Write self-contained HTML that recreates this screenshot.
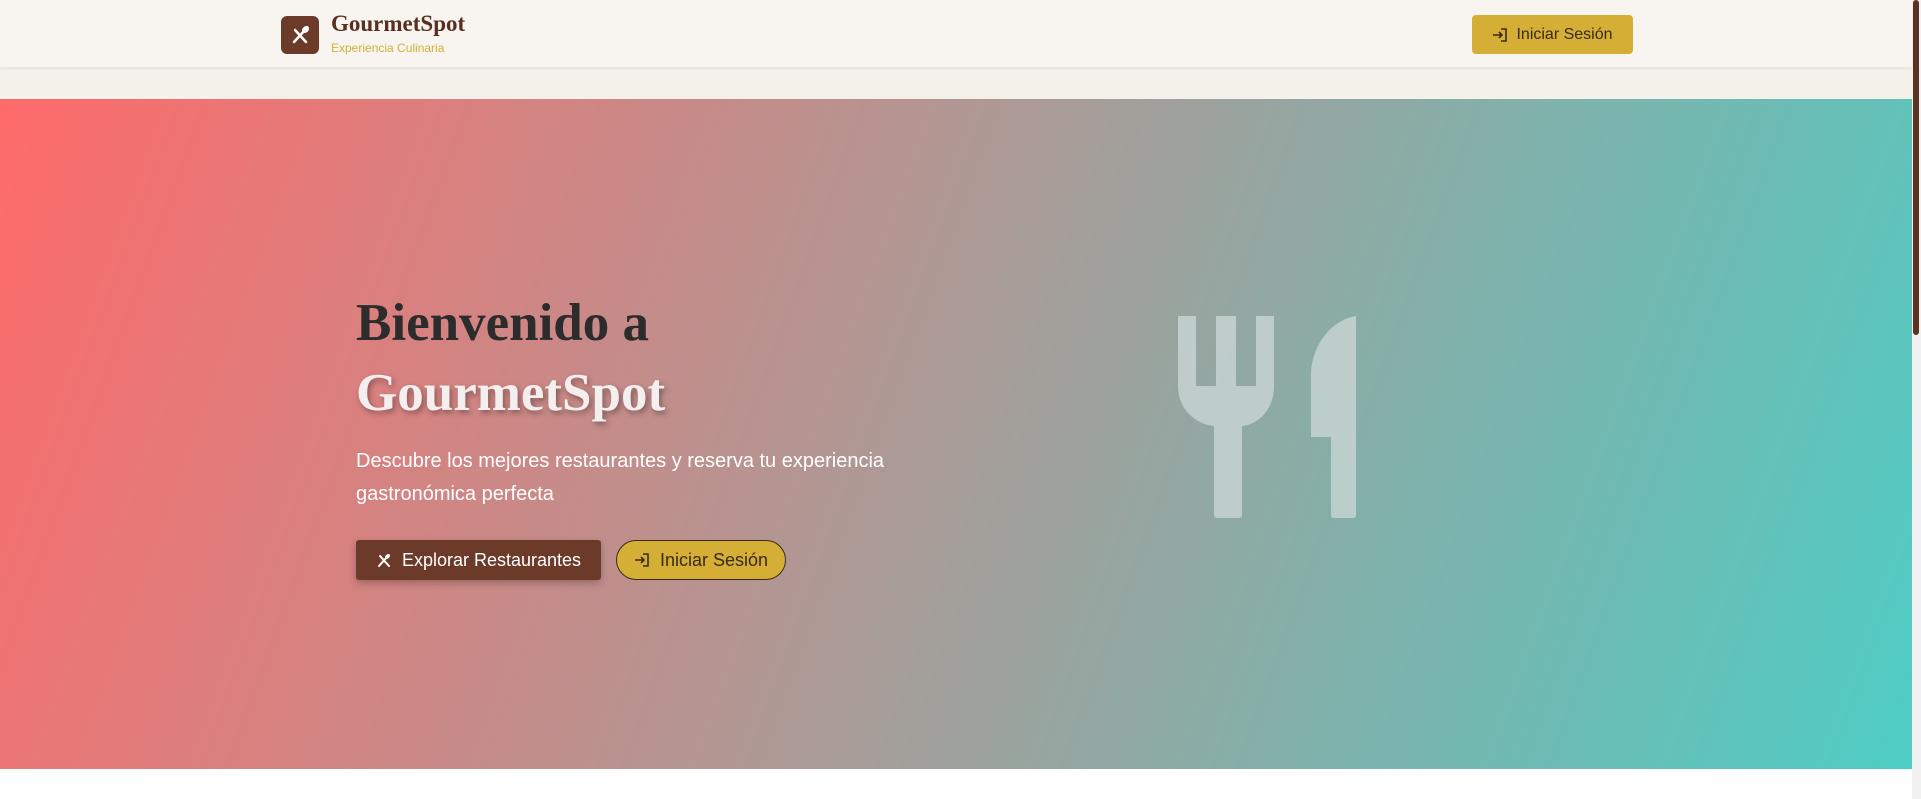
<!DOCTYPE html>
<html><head><meta charset="utf-8"><style>
*{margin:0;padding:0;box-sizing:border-box}
body{width:1921px;height:799px;overflow:hidden;background:#fff;font-family:"Liberation Sans",sans-serif;position:relative}
.hdr{position:absolute;left:0;top:0;width:1912px;height:68px;background:#f8f5f0;border-bottom:1px solid #ebe6df;box-shadow:0 1px 3px rgba(0,0,0,.06);z-index:2}
.gap{position:absolute;left:0;top:68px;width:1912px;height:31px;background:#f4f0ea}
.logo{position:absolute;left:281px;top:16px;width:38px;height:38px;background:#6b3a28;border-radius:6px;z-index:3}
.t1{position:absolute;left:331px;top:11px;font-family:"Liberation Serif",serif;font-weight:bold;font-size:23px;color:#5a2f20;z-index:3}
.t2{position:absolute;left:331px;top:41px;font-size:12px;color:#d4ae35;z-index:3}
.hb{position:absolute;left:1472px;top:15px;width:161px;height:39px;background:#d4ae35;border-radius:4px;color:#3a2a1a;font-size:16px;display:flex;align-items:center;justify-content:center;gap:8px;z-index:3}
.hero{position:absolute;left:0;top:99px;width:1912px;height:670px;background:linear-gradient(110deg,#ff6b6b 0%,#a89c98 50%,#4ecdc4 100%)}
h1{position:absolute;left:356px;top:288px;font-family:"Liberation Serif",serif;font-weight:bold;font-size:53px;line-height:70px;color:#2c2c2c}
h1 span{color:#f5eeee;text-shadow:2px 3px 6px rgba(0,0,0,.35)}
p{position:absolute;left:356px;top:445px;font-size:20px;line-height:33px;color:#fff}
.b1{position:absolute;left:356px;top:540px;width:245px;height:40px;background:#6b3a28;border-radius:3px;color:#fff;font-size:18px;display:flex;align-items:center;justify-content:center;gap:10px;box-shadow:0 3px 8px rgba(0,0,0,.25)}
.b2{position:absolute;left:616px;top:540px;width:170px;height:40px;background:#d4ae35;border:1px solid #3a2a1a;border-radius:20px;color:#3a2a1a;font-size:18px;display:flex;align-items:center;justify-content:center;gap:10px}
.sb{position:absolute;left:1912px;top:0;width:9px;height:799px;background:#f1f1f1}
.sb div{position:absolute;left:1px;top:0;width:6px;height:335px;background:#5a3322;border-radius:3px}
</style></head><body>
<div class="hdr"></div><div class="gap"></div>
<div class="logo"><svg width="38" height="38" viewBox="0 0 38 38"><g stroke="#fff" stroke-width="2.5" stroke-linecap="round" fill="none"><path d="M13 26L24 14"/><path d="M25 26L14 14"/></g><ellipse cx="24.5" cy="13.5" rx="3" ry="4" transform="rotate(45 24.5 13.5)" fill="#fff"/></svg></div>
<div class="t1">GourmetSpot</div><div class="t2">Experiencia Culinaria</div>
<div class="hb"><svg width="16" height="16" viewBox="0 0 16 16" fill="none" stroke="#3a2a1a" stroke-width="1.6"><path d="M1 8h9M7 5l3 3-3 3M9 2h5v12H9"/></svg>Iniciar Sesión</div>
<div class="hero"></div>
<h1>Bienvenido a<br><span>GourmetSpot</span></h1>
<p>Descubre los mejores restaurantes y reserva tu experiencia<br>gastronómica perfecta</p>
<div class="b1"><svg width="16" height="16" viewBox="0 0 16 16"><g stroke="#fff" stroke-width="2" stroke-linecap="round"><path d="M3 14L11 5M13 14L4 4"/></g><ellipse cx="11.5" cy="4.5" rx="2" ry="3" transform="rotate(45 11.5 4.5)" fill="#fff"/></svg>Explorar Restaurantes</div>
<div class="b2"><svg width="16" height="16" viewBox="0 0 16 16" fill="none" stroke="#3a2a1a" stroke-width="1.6"><path d="M1 8h9M7 5l3 3-3 3M9 2h5v12H9"/></svg>Iniciar Sesión</div>
<svg style="position:absolute;left:1176px;top:316px" width="182" height="202" viewBox="0 0 182 202"><g fill="#c9d6d3" opacity=".8"><path d="M2 0h18v70h20V0h20v70h20V0h18v70c0 22-14 38-32 40v89q0 3-3 3H41q-3 0-3-3v-89C18 108 2 92 2 70z"/><path d="M180 0v199q0 3-3 3h-19q-3 0-3-3V121h-20V60C135 30 155 4 180 0z"/></g></svg>
<div class="sb"><div></div></div>
</body></html>
